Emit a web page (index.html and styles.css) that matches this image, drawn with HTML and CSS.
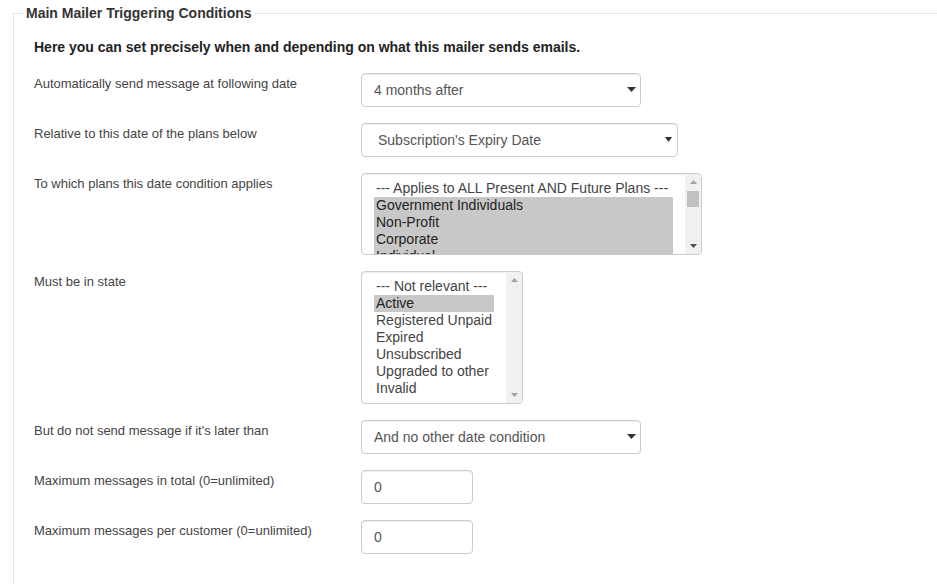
FILE: index.html
```html
<!DOCTYPE html>
<html lang="en">
<head>
<meta charset="utf-8">
<title>Main Mailer Triggering Conditions</title>
<link rel="stylesheet" href="styles.css">
</head>
<body>
<fieldset class="panel">
  <legend class="panel-legend">Main Mailer Triggering Conditions</legend>
  <div class="panel-body">
    <p class="intro">Here you can set precisely when and depending on what this mailer sends emails.</p>

    <div class="row">
      <label class="row-label">Automatically send message at following date</label>
      <div class="row-control">
        <span class="select-wrap w279">
          <select class="form-select"><option>4 months after</option></select>
          <svg class="caret caret-wide" width="9" height="5" viewBox="0 0 9 5"><path d="M0 0h9L4.5 5z" fill="#333"/></svg>
        </span>
      </div>
    </div>

    <div class="row">
      <label class="row-label">Relative to this date of the plans below</label>
      <div class="row-control">
        <span class="select-wrap w316">
          <select class="form-select native"><option>Subscription's Expiry Date</option></select>
          <svg class="caret caret-small" width="7" height="5" viewBox="0 0 7 5"><path d="M0 0h7L3.5 5z" fill="#333"/></svg>
        </span>
      </div>
    </div>

    <div class="row">
      <label class="row-label">To which plans this date condition applies</label>
      <div class="row-control">
        <div class="listbox lb-plans" role="listbox" aria-multiselectable="true">
          <div class="lb-items">
            <div class="lb-opt">--- Applies to ALL Present AND Future Plans ---</div>
            <div class="lb-opt sel">Government Individuals</div>
            <div class="lb-opt sel">Non-Profit</div>
            <div class="lb-opt sel">Corporate</div>
            <div class="lb-opt sel">Individual</div>
          </div>
          <div class="sbar">
            <div class="sbtn"><svg width="7" height="4" viewBox="0 0 7 4"><path d="M3.5 0L7 4H0z" fill="#a3a3a3"/></svg></div>
            <div class="strack"><div class="sthumb"></div></div>
            <div class="sbtn"><svg width="7" height="4" viewBox="0 0 7 4"><path d="M0 0h7L3.5 4z" fill="#505050"/></svg></div>
          </div>
        </div>
      </div>
    </div>

    <div class="row">
      <label class="row-label">Must be in state</label>
      <div class="row-control">
        <div class="listbox lb-state" role="listbox" aria-multiselectable="true">
          <div class="lb-items">
            <div class="lb-opt">--- Not relevant ---</div>
            <div class="lb-opt sel">Active</div>
            <div class="lb-opt">Registered Unpaid</div>
            <div class="lb-opt">Expired</div>
            <div class="lb-opt">Unsubscribed</div>
            <div class="lb-opt">Upgraded to other</div>
            <div class="lb-opt">Invalid</div>
          </div>
          <div class="sbar">
            <div class="sbtn"><svg width="7" height="4" viewBox="0 0 7 4"><path d="M3.5 0L7 4H0z" fill="#a3a3a3"/></svg></div>
            <div class="strack"></div>
            <div class="sbtn"><svg width="7" height="4" viewBox="0 0 7 4"><path d="M0 0h7L3.5 4z" fill="#a3a3a3"/></svg></div>
          </div>
        </div>
      </div>
    </div>

    <div class="row">
      <label class="row-label">But do not send message if it's later than</label>
      <div class="row-control">
        <span class="select-wrap w279">
          <select class="form-select"><option>And no other date condition</option></select>
          <svg class="caret caret-wide" width="9" height="5" viewBox="0 0 9 5"><path d="M0 0h9L4.5 5z" fill="#333"/></svg>
        </span>
      </div>
    </div>

    <div class="row">
      <label class="row-label">Maximum messages in total (0=unlimited)</label>
      <div class="row-control">
        <input class="form-input" type="text" value="0">
      </div>
    </div>

    <div class="row">
      <label class="row-label">Maximum messages per customer (0=unlimited)</label>
      <div class="row-control">
        <input class="form-input" type="text" value="0">
      </div>
    </div>
  </div>
</fieldset>
</body>
</html>
```

FILE: styles.css
```css
html, body {
  margin: 0;
  padding: 0;
  overflow: hidden;
  background: #fff;
}

body {
  font-family: "Liberation Sans", Arial, sans-serif;
  color: #333;
}

.panel {
  margin: 3px -4px 0 13px;
  padding: 0 0 40px 10px;
  border: 1px solid #e5e5e5;
  min-width: 0;
}

.panel-legend {
  padding: 0 2px;
  font-size: 14px;
  line-height: 20px;
  font-weight: bold;
  color: #333;
}

.panel-body {
  padding-left: 10px;
}

.intro {
  margin: 14px 0 16px;
  font-size: 14px;
  line-height: 20px;
  font-weight: bold;
  color: #222;
}

.row {
  display: flex;
  margin-bottom: 16px;
}

.row-label {
  width: 327px;
  flex: none;
  padding-top: 2px;
  font-size: 13px;
  line-height: 18px;
  color: #444;
}

.row-control {
  flex: none;
}

.select-wrap {
  position: relative;
  display: block;
}

.w279 { width: 280px; }
.w316 { width: 317px; }

.form-select {
  -webkit-appearance: none;
  appearance: none;
  display: block;
  width: 100%;
  height: 34px;
  margin: 0;
  padding: 6px 12px;
  border: 1px solid #ccc;
  border-radius: 4px;
  background: #fff;
  box-shadow: inset 0 1px 1px rgba(0, 0, 0, 0.075);
  font-family: "Liberation Sans", Arial, sans-serif;
  font-size: 14px;
  color: #555;
  box-sizing: border-box;
}

.form-select.native {
  padding-left: 16px;
}

.caret {
  position: absolute;
  top: 14px;
  pointer-events: none;
}

.caret-wide { right: 5px; }
.caret-small { right: 6px; top: 14px; }

.listbox {
  display: flex;
  border: 1px solid #ccc;
  border-radius: 4px;
  background: #fff;
  box-shadow: inset 0 1px 1px rgba(0, 0, 0, 0.075);
  overflow: hidden;
}

.lb-items {
  padding: 6px 12px;
  overflow: hidden;
  font-size: 14px;
  line-height: 17px;
  color: #444;
}

.lb-plans .lb-items {
  width: 299px;
  height: 68px;
}

.lb-state .lb-items {
  width: 120px;
  height: 119px;
}

.lb-opt {
  padding: 0 2px;
  white-space: nowrap;
}

.lb-opt.sel {
  background: #c8c8c8;
  color: #222;
}

.sbar {
  width: 16px;
  flex: none;
  display: flex;
  flex-direction: column;
  background: #f1f1f1;
}

.sbtn {
  height: 16px;
  flex: none;
  display: flex;
  align-items: center;
  justify-content: center;
}

.strack {
  flex: 1;
  padding: 1px 2px;
}

.sthumb {
  height: 16px;
  background: #c1c1c1;
}

.form-input {
  display: block;
  width: 112px;
  height: 34px;
  margin: 0;
  padding: 6px 12px;
  border: 1px solid #ccc;
  border-radius: 4px;
  box-shadow: inset 0 1px 1px rgba(0, 0, 0, 0.075);
  font-family: "Liberation Sans", Arial, sans-serif;
  font-size: 14px;
  color: #555;
  box-sizing: border-box;
}
```
